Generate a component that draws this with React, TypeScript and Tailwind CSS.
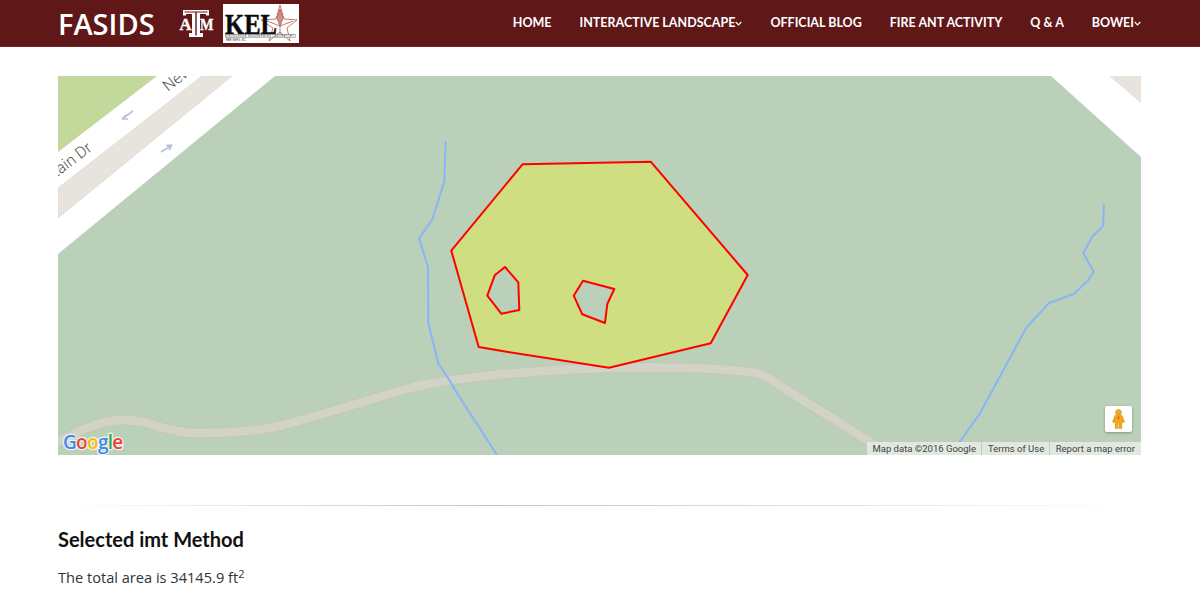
import React from "react";

const navItems = [
  { label: "HOME" },
  { label: "INTERACTIVE LANDSCAPE", caret: true },
  { label: "OFFICIAL BLOG" },
  { label: "FIRE ANT ACTIVITY" },
  { label: "Q & A" },
  { label: "BOWEI", caret: true },
];

const Caret = () => (
  <svg width="7" height="5" viewBox="0 0 7 5" className="mt-[1px]">
    <path d="M0.7 1 L3.5 3.8 L6.3 1" fill="none" stroke="#fff" strokeWidth="1.2" />
  </svg>
);

const AtmLogo = () => (
  <svg width="35" height="29" viewBox="0 0 35 29" className="shrink-0">
    <path d="M4 1 H30 V6.5 H27 V5 H21 V24 H24 V28 H10 V24 H13 V5 H7 V6.5 H4 Z" fill="#fff" />
    <path d="M5.5 2.5 H28.5 V3.5 H16.3 V26.5 H17.7 V3.5 H5.5 Z" fill="#5f1718" />
    <text x="0.5" y="21" fontFamily="'Liberation Serif', serif" fontWeight="700" fontSize="17" fill="#fff" stroke="#fff" strokeWidth="0.4" textLength="12" lengthAdjust="spacingAndGlyphs">A</text>
    <text x="21" y="21" fontFamily="'Liberation Serif', serif" fontWeight="700" fontSize="17" fill="#fff" stroke="#fff" strokeWidth="0.4" textLength="13.5" lengthAdjust="spacingAndGlyphs">M</text>
  </svg>
);

const KelLogo = () => (
  <svg width="76" height="39" viewBox="0 0 76 39" className="shrink-0 bg-white">
    <g fill="none" stroke="#b9544f" strokeWidth="0.8">
      <path d="M57 1 L61 15 L74 16 L64 24 L67 37 L57 28 L46 37 L50 24 L38 16 L53 15 Z" />
      <path d="M57 5 L60 14 L57 22 L54 14 Z" fill="#c9928c" />
      <path d="M57 22 L57 30 M57 22 L70 17 M57 22 L44 17" />
    </g>
    <text x="2" y="29.5" fontFamily="'Liberation Serif', serif" fontWeight="700" fontSize="29" fill="#0b0b0b" stroke="#0b0b0b" strokeWidth="0.5" textLength="52" lengthAdjust="spacingAndGlyphs">KEL</text>
    <rect x="2.5" y="30.5" width="70" height="3" fill="#fff" stroke="#777" strokeWidth="0.5" />
    <text x="3" y="33" fontFamily="'Liberation Sans', sans-serif" fontSize="2.6" fill="#333" textLength="68">KNOWLEDGE ENGINEERING LABORATORY</text>
    <text x="3" y="37" fontFamily="'Liberation Sans', sans-serif" fontSize="2.6" fill="#333">PARTNERS, INC.</text>
  </svg>
);

const roadPath =
  "M50 446 C70 436 95 421 120 420 C150 419 165 433 195 433 C225 433 255 431 275 427 C320 416 380 396 410 388 C440 380 520 370 610 368 C660 367 720 368 757 373 C768 376 775 383 790 392 L880 448";

const MapCanvas = () => (
  <svg viewBox="58 76 1083 379" width="1083" height="379" className="block absolute inset-0">
    <rect x="58" y="76" width="1083" height="379" fill="#bad0b8" />
    {/* top left road */}
    <path d="M58 76 H157 L58 152 Z" fill="#c3d99b" />
    <path d="M157 76 H275 L58 254 V152 Z" fill="#fff" />
    <path d="M202 76 H232 L58 218 V188 Z" fill="#e8e4dd" stroke="#d8d3c8" strokeWidth="0.6" />
    <path d="M133 111 L122 119 M122 119 L126 115 M122 119 L128 119" stroke="#b8c0da" strokeWidth="1.6" fill="none" />
    <path d="M161 152 L172 145 M172 145 L166 145.5 M172 145 L169 150" stroke="#b8c0da" strokeWidth="1.6" fill="none" />
    <text transform="translate(93 150) rotate(-37)" textAnchor="end" fontFamily="Roboto, sans-serif" fontWeight="300" fontSize="16" fill="#555">Mountain Dr</text>
    <text transform="translate(168 92) rotate(-38)" fontFamily="Roboto, sans-serif" fontWeight="300" fontSize="16" fill="#555">New</text>
    {/* top right road */}
    <path d="M1051 76 H1141 V157 Z" fill="#fff" />
    <path d="M1109 76 H1141 V103 Z" fill="#e8e4dd" />
    {/* track */}
    <path d={roadPath} fill="none" stroke="#c3c9b5" strokeWidth="11" strokeLinejoin="round" />
    <path d={roadPath} fill="none" stroke="#d2d3c7" strokeWidth="8.5" strokeLinejoin="round" />
    {/* streams */}
    <g fill="none" stroke="#8ab4f8" strokeWidth="2" strokeLinejoin="round">
      <path d="M445.7 141 L444.3 181.7 L432.3 219.3 L419 238.7 L428 266.7 L428.3 323.3 L438.3 363.3 L448.3 378.3 L455 390 L497 455" />
      <path d="M1104 204 L1103 226 L1092.3 236.7 L1083.3 253.3 L1093.7 271.7 L1088.3 280.3 L1073.7 294 L1049 303 L1026.3 327.7 L980 413.3 L955 448.3 L950 455" />
    </g>
    {/* selected field with holes */}
    <path
      fillRule="evenodd"
      fill="#cfde80"
      stroke="#ff0000"
      strokeWidth="2"
      strokeLinejoin="round"
      d="M522.5 164.3 L650.7 161.7 L747.7 275 L710.7 343.3 L609 367.7 L506.7 351.7 L478.7 347 L451.3 250.7 Z M505 267 L518.3 282.3 L519.3 310 L501.3 313.7 L487.3 295.7 L494.7 275.3 Z M583 280.7 L614.3 289 L607.3 304 L605 323 L582.3 314.3 L573.7 295.7 Z"
    />
    {/* google mark */}
    <text x="63" y="449" fontFamily="'Open Sans', sans-serif" fontWeight="600" fontSize="19" stroke="#eef2ec" strokeWidth="2.5" paintOrder="stroke" strokeLinejoin="round" letterSpacing="-0.7">
      <tspan fill="#4285f4">G</tspan>
      <tspan fill="#ea4335">o</tspan>
      <tspan fill="#fbbc05">o</tspan>
      <tspan fill="#4285f4">g</tspan>
      <tspan fill="#34a853">l</tspan>
      <tspan fill="#ea4335">e</tspan>
    </text>
  </svg>
);

const Pegman = () => (
  <div className="absolute right-[9px] bottom-[23px] flex h-[26px] w-[27px] items-center justify-center rounded-[2px] bg-white shadow-[0_1px_3px_rgba(0,0,0,0.3)]">
    <svg width="13" height="20" viewBox="0 0 13 20">
      <circle cx="6.5" cy="3.4" r="3" fill="#f5a81c" stroke="#c98a1a" strokeWidth="0.5" />
      <path d="M2.8 6.6 H10.2 L12.5 13 L10.6 13.6 L9.8 11.5 V19.5 H7 V14 H6 V19.5 H3.2 V11.5 L2.4 13.6 L0.5 13 Z" fill="#f5a81c" stroke="#c98a1a" strokeWidth="0.5" />
      <path d="M6.5 7 L5.5 8.6 L6.5 11 L7.5 8.6 Z" fill="#d8562a" />
    </svg>
  </div>
);

const Attribution = () => (
  <div className="absolute right-0 bottom-0 flex h-[13px] items-center gap-px font-['Roboto',sans-serif] text-[9.5px] leading-[13px] text-[#444]">
    <span className="bg-[#e0e8df] pl-[5px] pr-[5.5px]">Map data ©2016 Google</span>
    <span className="bg-[#e0e8df] pl-[5.5px] pr-[5px]">Terms of Use</span>
    <span className="bg-[#e0e8df] pl-[5.5px] pr-[6px]">Report a map error</span>
  </div>
);

export default function App() {
  return (
    <div className="h-[594px] overflow-hidden bg-white font-['Open_Sans',sans-serif] text-[#333]">
      <header className="flex h-[47px] items-center border-b border-[#6e2426] bg-[#5f1718] pl-[58px] pr-[59px]">
        <span className="mr-[24px] text-[29px] font-semibold leading-none text-white">FASIDS</span>
        <AtmLogo />
        <span className="w-[9px]" />
        <KelLogo />
        <nav className="ml-auto flex items-center gap-[28px] font-['Lato',sans-serif] text-[12.5px] font-bold text-white">
          {navItems.map((item) => (
            <a key={item.label} className="flex items-center whitespace-nowrap">
              {item.label}
              {item.caret && <Caret />}
            </a>
          ))}
        </nav>
      </header>

      <main className="pl-[58px] pr-[59px] pt-[29px]">
        <div className="relative h-[379px] w-[1083px] overflow-hidden">
          <MapCanvas />
          <Pegman />
          <Attribution />
        </div>

        <div className="mt-[50px] h-px bg-linear-to-r from-transparent via-[#c4c4c4] via-40% to-transparent" />

        <h3 className="mt-[22px] font-['Lato',sans-serif] text-[20px] font-bold leading-[22px] text-[#111]">
          Selected imt Method
        </h3>
        <p className="mt-[16px] text-[14.6px] leading-[22px]">
          The total area is 34145.9 ft<sup className="text-[11px]">2</sup>
        </p>
        <p className="mt-[4px] pl-[314px] text-[14.6px] leading-[22px]">
          <sup className="text-[11px]">2</sup>
        </p>
      </main>
    </div>
  );
}
